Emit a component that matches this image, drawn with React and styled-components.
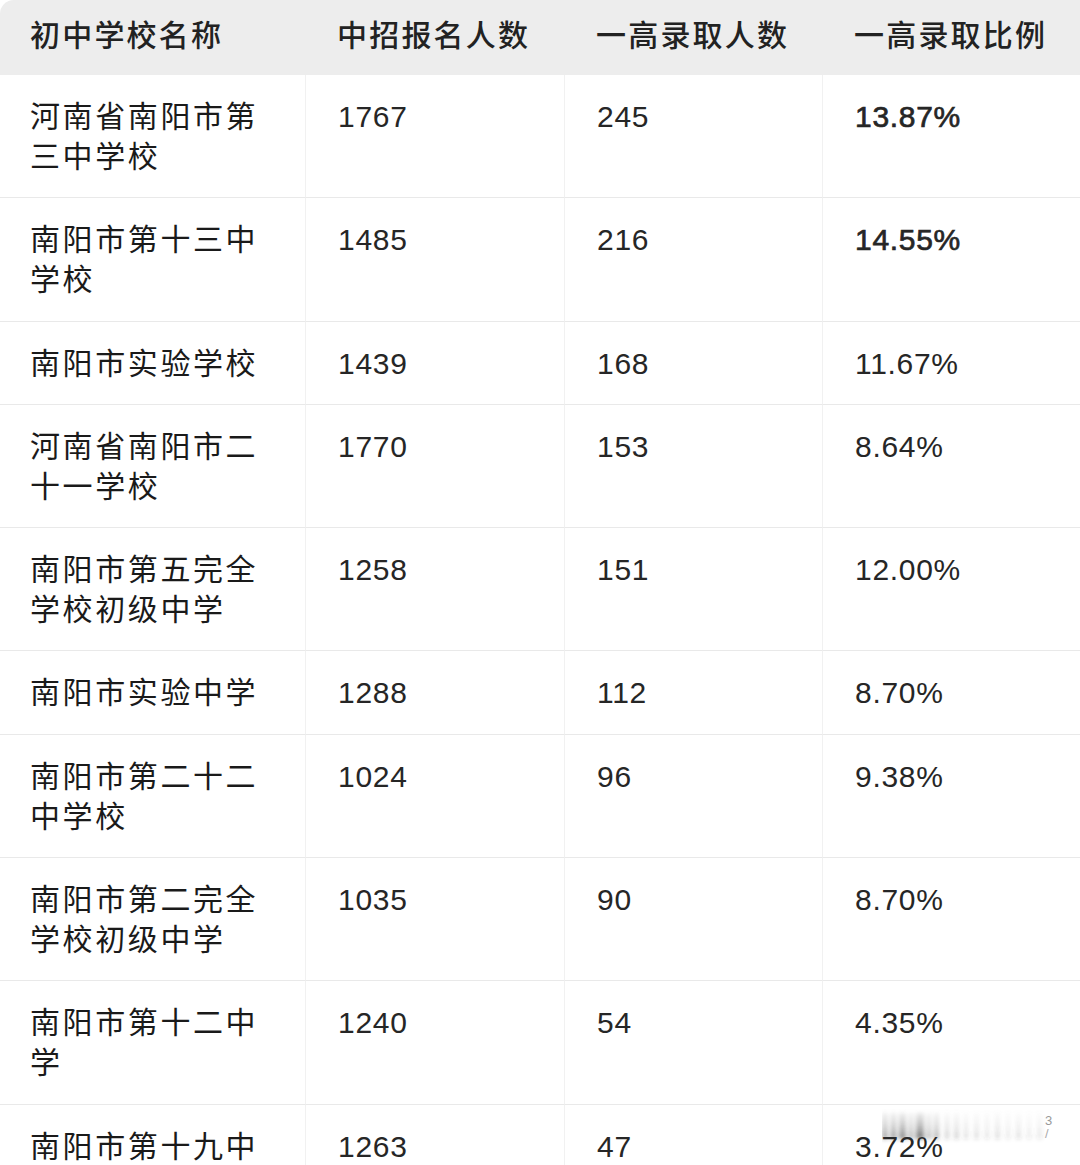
import React from "react";
import styled, { createGlobalStyle } from "styled-components";

const Global = createGlobalStyle`
  html, body { margin: 0; padding: 0; background: #ffffff; }
  body { overflow: hidden; height: 1165px; }
  #root { width: 1080px; height: 1165px; overflow: hidden; position: relative; }
`;

const FONT = `"Liberation Sans", "Noto Sans CJK SC", sans-serif`;

const Table = styled.div`
  display: grid;
  grid-template-columns: 305px 259px 258px 258px;
  width: 1080px;
  font-family: ${FONT};
  color: #1c1c1c;
`;

const HeadCell = styled.div`
  height: 75px;
  box-sizing: border-box;
  background: #ededed;
  display: flex;
  align-items: center;
  padding-left: ${(p) => (p.$first ? "30px" : "32px")};
  padding-bottom: 9px;
  font-size: 30px;
  letter-spacing: 2.2px;
  font-weight: 500;
  color: #222;
  border-top-left-radius: ${(p) => (p.$first ? "14px" : "0")};
`;

const Cell = styled.div`
  box-sizing: border-box;
  padding: 22px ${(p) => (p.$name ? "36px" : "10px")} 20px
    ${(p) => (p.$name ? "30px" : "32px")};
  border-bottom: 1px solid #e9e9e9;
  border-left: ${(p) => (p.$name ? "none" : "1.5px solid #f1f1f1")};
  font-size: 30px;
  line-height: 40.15px;
  letter-spacing: ${(p) => (p.$name ? "2.6px" : "0.7px")};
  color: ${(p) => (p.$name ? "#1a1a1a" : "#262626")};
  -webkit-text-stroke: ${(p) => (p.$bold ? "0.7px #262626" : "0")};
  word-break: break-all;
`;

const Watermark = styled.div`
  position: absolute;
  right: 18px;
  bottom: 20px;
  width: 180px;
  height: 36px;
`;

const rows = [
  ["河南省南阳市第三中学校", "1767", "245", "13.87%", true],
  ["南阳市第十三中学校", "1485", "216", "14.55%", true],
  ["南阳市实验学校", "1439", "168", "11.67%"],
  ["河南省南阳市二十一学校", "1770", "153", "8.64%"],
  ["南阳市第五完全学校初级中学", "1258", "151", "12.00%"],
  ["南阳市实验中学", "1288", "112", "8.70%"],
  ["南阳市第二十二中学校", "1024", "96", "9.38%"],
  ["南阳市第二完全学校初级中学", "1035", "90", "8.70%"],
  ["南阳市第十二中学", "1240", "54", "4.35%"],
  ["南阳市第十九中学", "1263", "47", "3.72%"],
];

const bars = [
  [0, 6, 0.45], [9, 5, 0.55], [17, 7, 0.6], [27, 4, 0.45], [34, 8, 0.7],
  [45, 4, 0.4], [52, 5, 0.4], [63, 4, 0.25], [72, 5, 0.22], [82, 4, 0.18],
  [92, 5, 0.16], [103, 4, 0.15], [113, 5, 0.17], [124, 4, 0.13], [134, 5, 0.15],
  [145, 4, 0.12], [155, 5, 0.12],
];

export default function App() {
  return (
    <>
      <Global />
      <Table>
        <HeadCell $first>初中学校名称</HeadCell>
        <HeadCell>中招报名人数</HeadCell>
        <HeadCell>一高录取人数</HeadCell>
        <HeadCell>一高录取比例</HeadCell>
        {rows.map((r, i) => (
          <React.Fragment key={i}>
            <Cell $name>{r[0]}</Cell>
            <Cell>{r[1]}</Cell>
            <Cell>{r[2]}</Cell>
            <Cell $bold={r[4]}>{r[3]}</Cell>
          </React.Fragment>
        ))}
      </Table>
      <Watermark>
        <svg width="180" height="36" viewBox="0 0 180 36">
          <defs>
            <filter id="bl" x="-20%" y="-20%" width="140%" height="140%">
              <feGaussianBlur stdDeviation="2.2" />
            </filter>
            <linearGradient id="fade" x1="0" y1="0" x2="0" y2="1">
              <stop offset="0" stopColor="#999" stopOpacity="0.3" />
              <stop offset="1" stopColor="#333" stopOpacity="1" />
            </linearGradient>
          </defs>
          <g filter="url(#bl)">
            {bars.map(([x, w, o], i) => (
              <rect key={i} x={x} y="4" width={w} height="26" fill="url(#fade)" opacity={o} />
            ))}
          </g>
          <text x="163" y="16" fontSize="13" fill="#999" fontFamily="Liberation Sans, sans-serif">3</text>
          <text x="163" y="29" fontSize="13" fill="#aaa" fontFamily="Liberation Sans, sans-serif">/</text>
        </svg>
      </Watermark>
    </>
  );
}
